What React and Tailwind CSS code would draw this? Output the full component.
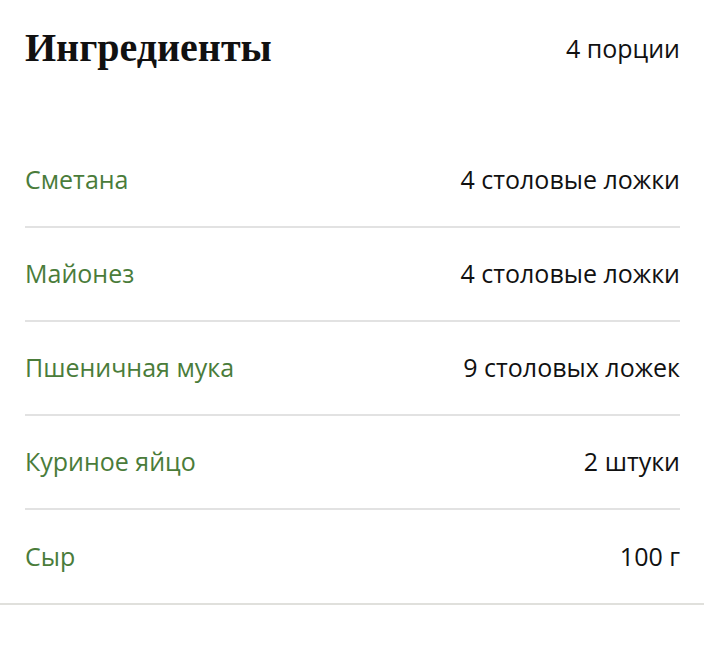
import React from 'react';

const ingredients = [
  { name: 'Сметана', amount: '4 столовые ложки' },
  { name: 'Майонез', amount: '4 столовые ложки' },
  { name: 'Пшеничная мука', amount: '9 столовых ложек' },
  { name: 'Куриное яйцо', amount: '2 штуки' },
  { name: 'Сыр', amount: '100 г' },
];

const App = () => {
  return (
    <div className="bg-white w-[704px] h-[654px] font-['Open_Sans',sans-serif]">
      {/* Header */}
      <div className="flex items-center justify-between pl-[25px] pr-[24px] h-[96px]">
        <h2 className="font-['Liberation_Serif',serif] font-bold text-[40px] text-[#111] leading-none">
          Ингредиенты
        </h2>
        <span className="text-[25px] text-[#111] leading-none">4 порции</span>
      </div>

      {/* Rows */}
      <ul className="mt-[38px]">
        {ingredients.map((item, i) => (
          <li
            key={item.name}
            className={
              i === ingredients.length - 1
                ? 'border-b-2 border-[#e0e0dc]'
                : 'px-[25px]'
            }
          >
            <div
              className={
                i === ingredients.length - 1
                  ? 'flex items-center justify-between h-[93px] pl-[25px] pr-[24px]'
                  : 'flex items-center justify-between h-[94px] border-b-2 border-[#e2e2e2] mr-[-1px]'
              }
            >
              <span className="text-[25px] text-[#4a7c3a]">{item.name}</span>
              <span className="text-[25px] text-[#111]">{item.amount}</span>
            </div>
          </li>
        ))}
      </ul>
    </div>
  );
};

export default App;
